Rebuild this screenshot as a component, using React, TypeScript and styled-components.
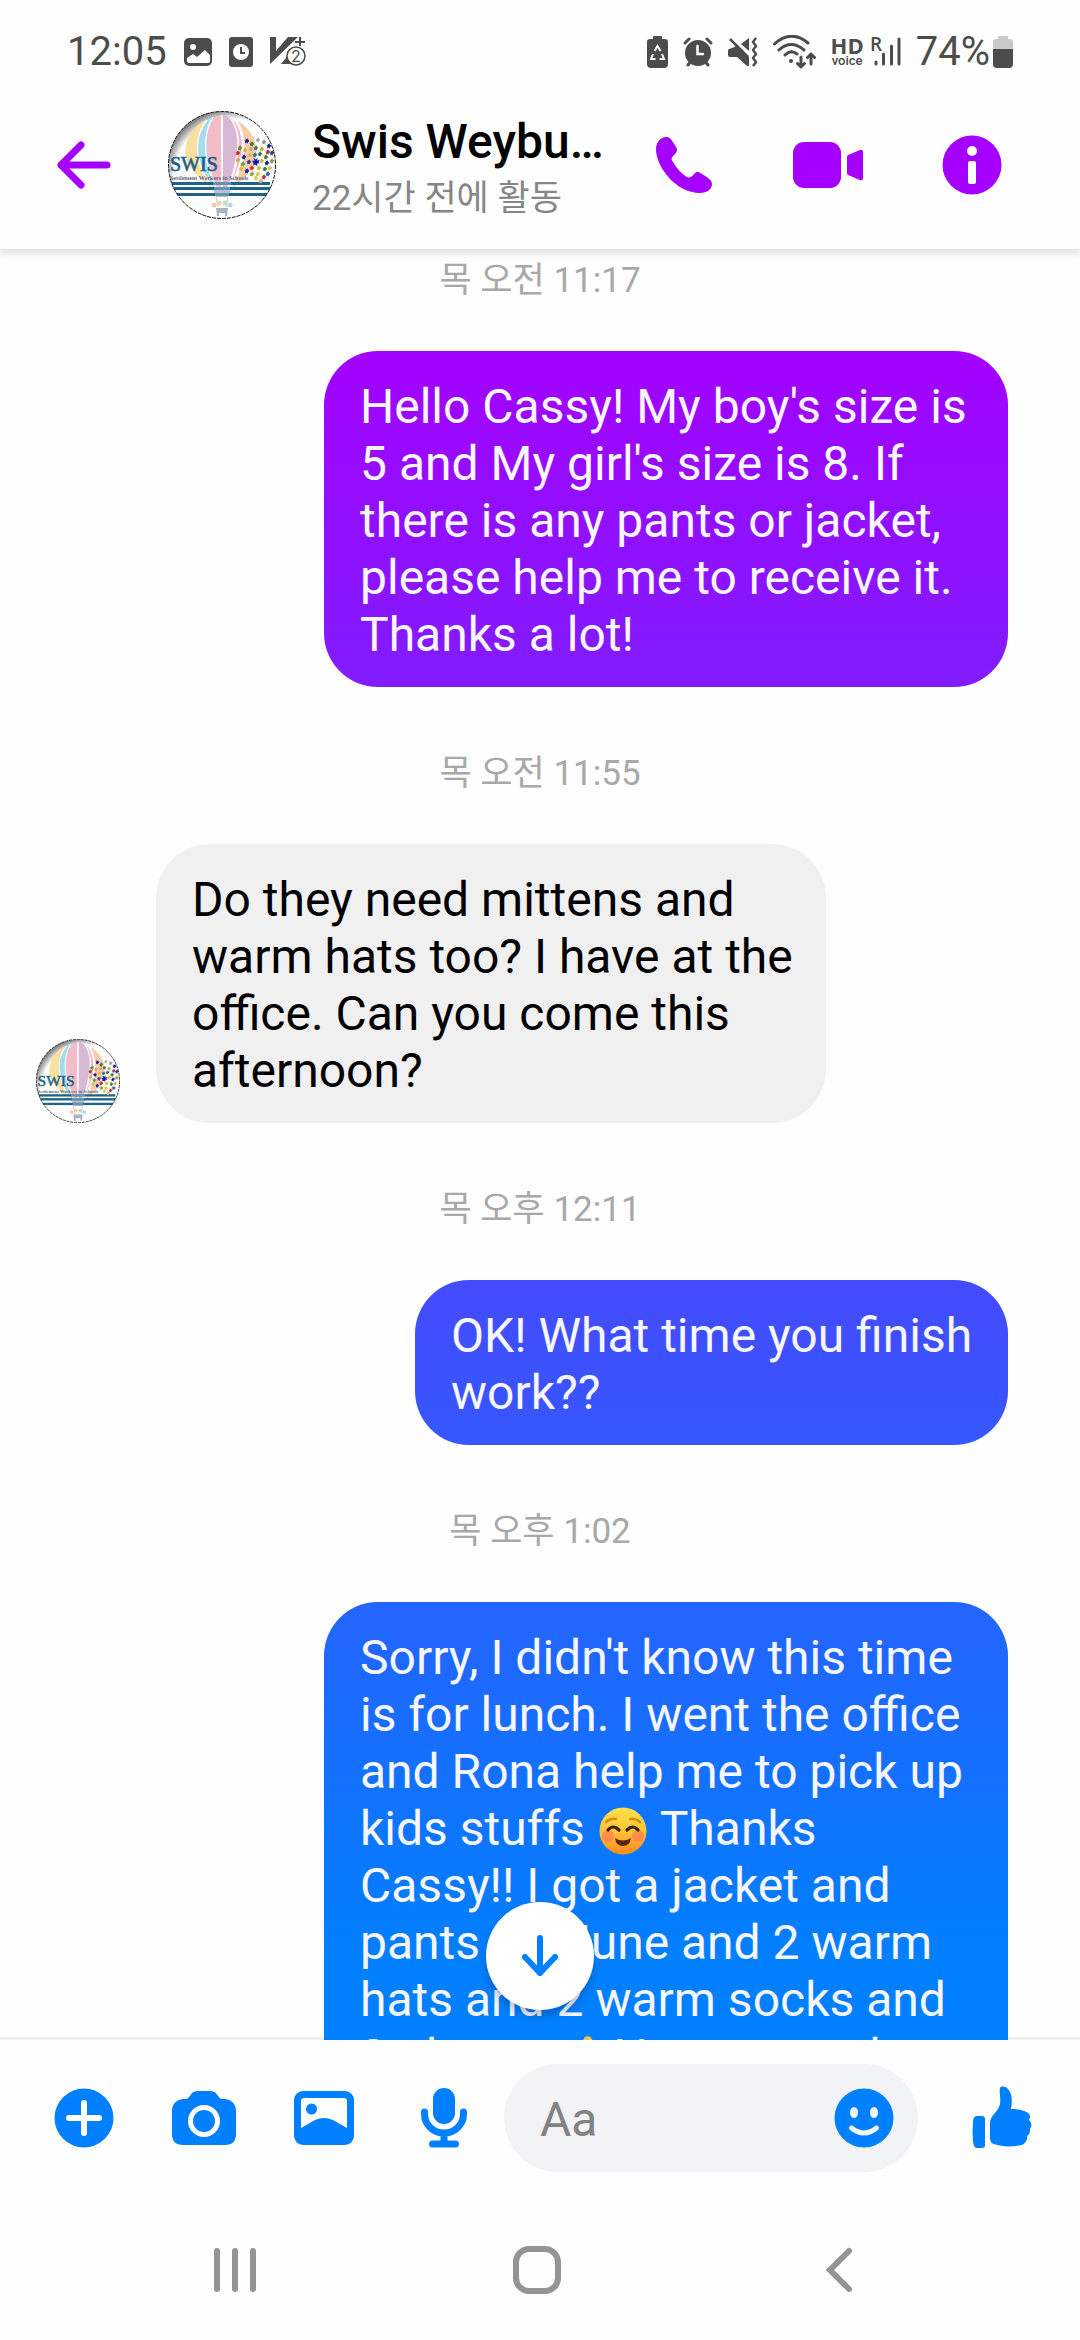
import React from "react";
import styled, { createGlobalStyle } from "styled-components";

const GlobalStyle = createGlobalStyle`
  *, *::before, *::after { box-sizing: border-box; }
  html, body { margin: 0; padding: 0; background: #fefefe; }
  body { font-family: Roboto, "Noto Sans CJK KR", sans-serif; color: #000; }
  svg { display: block; flex: none; }
`;

const ACCENT = "#a500ff";
const BLUE = "#0080ff";
const STATUS = "#4c4c4c";

const Screen = styled.div`
  display: flex;
  flex-direction: column;
  height: 100vh;
  overflow: hidden;
`;

const StatusBar = styled.div`
  display: flex;
  justify-content: space-between;
  align-items: center;
  flex: none;
  height: 81px;
  padding: 22px 67px 0 67px;
  color: ${STATUS};
  font-size: 40px;
  line-height: 48px;
`;

const StatusGroup = styled.div<{ $gap: number }>`
  display: flex;
  align-items: center;
  gap: ${(p) => p.$gap}px;
`;

const HdVoice = styled.div`
  display: flex;
  flex-direction: column;
  align-items: center;
  strong {
    font-family: "Open Sans", "Noto Sans", sans-serif;
    font-size: 22px;
    line-height: 18px;
    font-weight: 700;
  }
  span {
    font-size: 13px;
    line-height: 13px;
    font-weight: 500;
  }
`;

const Header = styled.header`
  position: relative;
  z-index: 1;
  display: flex;
  align-items: center;
  flex: none;
  height: 168px;
  padding-right: 36px;
  background: #fefefe;
  clip-path: inset(0 0 -16px 0);
  box-shadow: 0 2px 8px 2px rgba(0, 0, 0, 0.12);
`;

const IconButton = styled.button<{ $width: number; $color?: string }>`
  display: flex;
  align-items: center;
  justify-content: center;
  flex: none;
  width: ${(p) => p.$width}px;
  height: 108px;
  padding: 0;
  border: 0;
  background: none;
  color: ${(p) => p.$color ?? BLUE};
`;

const Contact = styled.div`
  flex: 1;
  min-width: 0;
  padding: 10px 0 0 36px;
`;

const Name = styled.h1`
  margin: 0;
  font-size: 48px;
  line-height: 58px;
  font-weight: 500;
  white-space: nowrap;
`;

const Activity = styled.p`
  margin: 0;
  font-size: 35px;
  line-height: 56px;
  color: #868686;
  white-space: nowrap;
`;

const ChatArea = styled.main`
  position: relative;
  flex: 1;
  min-height: 0;
  background: linear-gradient(#f0f0f0, #f0f0f0) bottom / 100% 3px no-repeat;
`;

const Messages = styled.div`
  display: flex;
  flex-direction: column;
  height: 100%;
  overflow-y: auto;
  scrollbar-width: none;
`;

const Stamp = styled.time`
  flex: none;
  margin: 66px 0 49px;
  font-size: 35px;
  line-height: 42px;
  text-align: center;
  color: #a8a8a8;
  &:first-child {
    margin-top: 11px;
  }
`;

const MessageRow = styled.div<{ $sent?: boolean }>`
  display: flex;
  flex: none;
  align-items: flex-end;
  justify-content: ${(p) => (p.$sent ? "flex-end" : "flex-start")};
  gap: 36px;
  padding: 0 72px 0 36px;
`;

const Bubble = styled.div<{ $sent?: boolean; $width: number }>`
  max-width: ${(p) => p.$width}px;
  padding: 27px 30px 24px 36px;
  border-radius: 54px;
  font-size: 48px;
  line-height: 57px;
  color: ${(p) => (p.$sent ? "#f6f6ff" : "#000")};
  background: ${(p) =>
    p.$sent ? `linear-gradient(${ACCENT} 14%, ${BLUE} 84%) fixed` : "#f0f0f0"};
`;

const EmojiBox = styled.span`
  display: inline-block;
  width: 52px;
  height: 48px;
  padding: 0 2px;
  vertical-align: -10px;
`;

const JumpButton = styled.button`
  position: absolute;
  left: 50%;
  bottom: 30px;
  display: flex;
  align-items: center;
  justify-content: center;
  width: 108px;
  height: 108px;
  margin-left: -54px;
  padding: 0;
  border: 0;
  border-radius: 50%;
  background: #fff;
  color: ${BLUE};
  box-shadow: 0 6px 10px rgba(0, 0, 0, 0.22);
`;

const Composer = styled.form`
  display: flex;
  flex: none;
  align-items: center;
  padding: 24px 18px 28px 24px;
`;

const InputPill = styled.div`
  display: flex;
  flex: 1;
  min-width: 0;
  height: 108px;
  margin-right: 24px;
  border-radius: 54px;
  background: #f1f3f5;
`;

const TextInput = styled.input`
  flex: 1;
  min-width: 0;
  padding: 2px 0 0 36px;
  border: 0;
  outline: 0;
  background: none;
  font: 400 48px/57px Roboto, "Noto Sans CJK KR", sans-serif;
  &::placeholder {
    color: #828282;
    opacity: 1;
  }
`;

const NavBar = styled.nav`
  display: grid;
  grid-template-columns: repeat(3, 1fr);
  flex: none;
  justify-items: center;
  align-items: center;
  height: 140px;
  padding: 0 90px 0 84px;
`;

const HANDS: [number, number, string][] = [
  [79, 30, "#1a1a9c"], [84, 33, "#2b7a3a"], [90, 29, "#b9a8a0"], [96, 31, "#999"], [101, 35, "#1a1a9c"],
  [72, 37, "#4f8f3c"], [77, 39, "#d9b43c"], [83, 38, "#c8a0a8"], [88, 37, "#3d7a50"], [94, 38, "#b5b034"], [100, 41, "#b03048"],
  [70, 42, "#c0303a"], [76, 46, "#1a1a9c"], [82, 44, "#e0b94a"], [87, 44, "#2f6fa0"], [92, 43, "#3a7f3c"], [98, 46, "#6b6b38"], [104, 42, "#22408c"],
  [70, 49, "#d2b236"], [75, 53, "#5aa04a"], [81, 51, "#3b3b9a"], [94, 50, "#cdb742"], [99, 52, "#1a1a9c"], [104, 50, "#70a046"],
  [73, 58, "#d8c040"], [79, 60, "#1a1a9c"], [84, 57, "#c23030"], [91, 57, "#d9b430"], [97, 58, "#3a7a3a"], [102, 57, "#d4c050"],
  [84, 63, "#7aa848"], [90, 63, "#e0c440"], [96, 66, "#c03030"], [93, 70, "#d9b080"], [88, 67, "#e2c850"], [100, 63, "#3a60a0"],
];

const HAND_PATH = "M-3 -1L-1 -1L-2 -3L0 -2L1 -3.500L1 -1L3 -2L2 0L3 1L1 1L1 3L-1 2L-2 3L-2 1Z";

function Avatar({ size }: { size: number }) {
  const id = `face-${size}`;
  return (
    <svg width={size} height={size} viewBox="0 0 108 108" role="img" aria-label="Swis">
      <defs>
        <clipPath id={id}>
          <circle cx="54" cy="54" r="53.5" />
        </clipPath>
        <radialGradient id={`${id}-rim`} cx="0.6" cy="0.62" r="0.64">
          <stop offset="0.85" stopColor="#fff" />
          <stop offset="1" stopColor="#808080" />
        </radialGradient>
      </defs>
      <g clipPath={`url(#${id})`}>
        <rect width="108" height="108" fill={`url(#${id}-rim)`} />
        <path d="M38 9C20 18 14 36 19 50C24 63 38 72 46 80C32 58 23 32 38 9Z" fill="#f9e0a0" />
        <path d="M42 7C28 20 26 40 34 57C39 68 44 74 48 80C40 52 36 28 46 6Z" fill="#a4dcee" />
        <path d="M53 4C40 6 36 30 41 50C44 66 48 76 51 81H53.500Z" fill="#f4bcc6" />
        <path d="M55 4C68 6 72 30 67 50C64 66 60 76 57 81H54.500Z" fill="#d8b8d4" />
        <path d="M63 6C76 18 76 40 70 56C66 67 62 74 59 80C70 52 74 28 63 6Z" fill="#f6b4d4" />
        <path d="M70 10C86 20 92 36 86 52C82 64 68 74 62 80C76 58 82 32 70 10Z" fill="#f8cda8" />
        <g fill="none" stroke="#fff" strokeWidth="1.300">
          <path d="M54 4V80M45 6C33 24 36 55 50 80M63 6C75 24 72 55 58 80M39 9C22 30 30 60 47 80" />
        </g>
        <path d="M44 76H64L60 86H48Z" fill="#b9c0d8" />
        <path d="M48 86L50 96M60 86L58 96" stroke="#c8c8d0" strokeWidth="1" />
        <g fill="#1f6388">
          <rect y="71" width="102" height="3" />
          <rect y="76" width="104" height="3" />
          <rect y="82" width="102" height="3" />
        </g>
        <g fill="#8fb8c8" opacity="0.600">
          <rect x="45" y="71" width="18" height="3" />
          <rect x="46" y="76" width="16" height="3" />
          <rect x="47" y="82" width="14" height="3" />
        </g>
        <g>
          <circle cx="46" cy="94" r="2.500" fill="#f2c6b8" />
          <circle cx="51" cy="92" r="2.500" fill="#f3d3a2" />
          <circle cx="57" cy="92" r="2.500" fill="#c2dfc0" />
          <circle cx="62" cy="94" r="2.500" fill="#b7d7ea" />
        </g>
        <path d="M48 97H60L59 105H57V102H51V105H49Z" fill="#a3b4c8" />
        {HANDS.map(([x, y, fill]) => (
          <path
            key={`${x}-${y}`}
            transform={`translate(${x} ${y}) scale(0.85)`}
            d={HAND_PATH}
            fill={fill}
          />
        ))}
        <path transform="translate(88 51) scale(1.300)" d={HAND_PATH} fill="#0c1ca8" />
        <text x="2" y="60" fontFamily='"Liberation Serif", serif' fontSize="20" fill="#1d5e84" stroke="#1d5e84" strokeWidth="0.600">
          SWIS
        </text>
        <text x="2" y="69" fontFamily='"Liberation Serif", serif' fontWeight="700" fontSize="6" fill="#66667a">
          Settlement Workers in Schools
        </text>
      </g>
      <circle cx="54" cy="54" r="53.500" fill="none" stroke="#111" strokeWidth="1" strokeDasharray="4 1" />
    </svg>
  );
}

const BlushEmoji = () => (
  <EmojiBox role="img" aria-label="smiling face">
    <svg width="48" height="48" viewBox="0 0 48 48">
      <defs>
        <linearGradient id="skin" x1="0" y1="0" x2="0" y2="1">
          <stop offset="0" stopColor="#ffe24a" />
          <stop offset="0.500" stopColor="#ffc436" />
          <stop offset="1" stopColor="#ff8a1c" />
        </linearGradient>
      </defs>
      <circle cx="24" cy="24" r="23.500" fill="url(#skin)" />
      <circle cx="9" cy="29" r="6" fill="#ff7a50" opacity="0.700" />
      <circle cx="39" cy="29" r="6" fill="#ff7a50" opacity="0.700" />
      <g fill="none" strokeLinecap="round">
        <path d="M7 15Q11 11 17 12M31 12Q37 11 41 15" stroke="#d98a12" strokeWidth="2.500" />
        <path d="M9 23Q14 17 20 23M28 23Q34 17 39 23" stroke="#3a2410" strokeWidth="3.200" />
      </g>
      <path d="M16 31Q24 36 32 31Q31 39 24 39Q17 39 16 31Z" fill="#5a2410" />
    </svg>
  </EmojiBox>
);

const ThumbEmoji = () => (
  <EmojiBox role="img" aria-label="thumbs up">
    <svg width="48" height="48" viewBox="0 0 48 48">
      <path
        d="M6 24C14 22 20 14 32 4C32 1 38 0 40 4C42 10 36 16 34 20H44C48 22 48 40 40 46H14L6 42Z"
        fill="#f7c544"
      />
    </svg>
  </EmojiBox>
);

const PictureGlyph = () => (
  <svg width="28" height="28" viewBox="0 0 28 28">
    <rect width="28" height="28" rx="5" fill={STATUS} />
    <circle cx="9" cy="9" r="3" fill="#fff" />
    <path d="M3 23V20L9 16L13 19L21 12L26 17V23Q26 25 24 25H5Q3 25 3 23Z" fill="#fff" />
  </svg>
);

const ClockCardGlyph = () => (
  <svg width="24" height="30" viewBox="0 0 24 30">
    <rect width="24" height="30" rx="3" fill={STATUS} />
    <circle cx="12" cy="15" r="8" fill="#fff" />
    <path d="M12 10V16H16" fill="none" stroke={STATUS} strokeWidth="2" />
  </svg>
);

const VaccineGlyph = () => (
  <svg width="36" height="31" viewBox="0 0 36 31">
    <path d="M0 1H6V15L18 1H28L0 28Z" fill={STATUS} />
    <path d="M11 28L19 18L17 16L23 12V28Z" fill={STATUS} />
    <path d="M30 1V10M25 6H35" stroke={STATUS} strokeWidth="2" />
    <circle cx="26" cy="20" r="9" fill="#fefefe" stroke={STATUS} strokeWidth="1.500" />
    <text x="26" y="26" textAnchor="middle" fontFamily="Roboto, sans-serif" fontSize="16" fill={STATUS}>
      2
    </text>
  </svg>
);

const EcoBatteryGlyph = () => (
  <svg width="21" height="32" viewBox="0 0 21 32">
    <path d="M6 1Q6 0 7 0H14Q15 0 15 1V3H18Q21 3 21 6V28Q21 32 17 32H4Q0 32 0 28V6Q0 3 3 3H6Z" fill={STATUS} />
    <path d="M7.500 15L10.500 10L13.500 15M15 18L17 23H12.500M8.500 23H4L6 18" fill="none" stroke="#fff" strokeWidth="2" />
  </svg>
);

const AlarmGlyph = () => (
  <svg width="30" height="30" viewBox="0 0 30 30" fill="none" stroke={STATUS} strokeLinecap="round">
    <circle cx="15" cy="16" r="13" fill={STATUS} stroke="none" />
    <path d="M2 6L6 2M28 6L24 2M5 28L8 24M25 28L22 24" strokeWidth="3" />
    <path d="M14.500 9V17H20" stroke="#fff" strokeWidth="2.500" />
  </svg>
);

const MuteGlyph = () => (
  <svg width="30" height="30" viewBox="0 0 30 30">
    <path d="M13 7L21 1V14ZM1 12Q0 12 0 14V18Q0 20 2 20H9L19 29Q21 30 21 27V20L8 9Q5 11 1 12Z" fill={STATUS} />
    <path d="M2 2L20 20" stroke={STATUS} strokeWidth="2.500" />
    <path d="M28 1L25 5L28 9L25 13L28 17L25 21L28 25L25 29" fill="none" stroke={STATUS} strokeWidth="2.500" strokeLinejoin="round" />
  </svg>
);

const WifiGlyph = () => (
  <svg width="43" height="34" viewBox="0 0 43 34" fill="none" stroke={STATUS} strokeWidth="3" strokeLinecap="round" strokeLinejoin="round">
    <path d="M1.500 9Q18 -6 35 8M6 15Q18 4 31 15M12 20Q18 14 24 19" />
    <circle cx="18" cy="26" r="2" fill={STATUS} stroke="none" />
    <path d="M28 22V32M24.500 28.500L28 32L31.500 28.500M38 29V19M34.500 22.500L38 19L41.500 22.500" />
  </svg>
);

const SignalGlyph = () => (
  <svg width="30" height="31" viewBox="0 0 30 31">
    <text x="-1" y="15" fontFamily='"Open Sans", "Noto Sans", sans-serif' fontSize="19" fontWeight="600" fill={STATUS}>
      R
    </text>
    <path d="M5 26V28M12.500 18V28M20.500 10V28M28 3V28" stroke={STATUS} strokeWidth="3" strokeLinecap="round" />
  </svg>
);

const BatteryGlyph = () => (
  <svg width="20" height="32" viewBox="0 0 20 32">
    <path d="M5 1Q5 0 6 0H14Q15 0 15 1V3H17Q20 3 20 6V14H0V6Q0 3 3 3H5Z" fill="#cacaca" />
    <path d="M0 13H20V28Q20 32 16 32H4Q0 32 0 28Z" fill={STATUS} />
  </svg>
);

const BackArrow = () => (
  <svg width="54" height="48" viewBox="0 0 54 48" fill="none" stroke="currentColor" strokeWidth="7" strokeLinecap="round" strokeLinejoin="round">
    <path d="M4 24H50M24 4L4 24L24 44" />
  </svg>
);

const PhoneIcon = () => (
  <svg width="56" height="57" viewBox="0 0 56 57" fill="currentColor">
    <path d="M0 12C0 4 6 0 10 0C14 0 15 2 20 10C22 13 21 15 18 18C15 21 15 22 17 25C21 32 26 37 31 40C33 41 35 41 38 37C41 34 43 35 46 37C54 42 56 44 56 47C56 52 51 56 44 56C20 56 0 30 0 12Z" />
  </svg>
);

const VideoIcon = () => (
  <svg width="70" height="46" viewBox="0 0 70 46" fill="currentColor">
    <rect width="48" height="46" rx="11" />
    <path d="M54 15Q54 14 55 13L67 8Q70 7 70 10V36Q70 39 67 38L55 33Q54 32 54 31Z" />
  </svg>
);

const InfoIcon = () => (
  <svg width="60" height="60" viewBox="0 0 60 60">
    <circle cx="30" cy="30" r="29.500" fill="currentColor" />
    <circle cx="30" cy="16" r="5" fill="#fff" />
    <rect x="26" y="26" width="8" height="23" rx="2" fill="#fff" />
  </svg>
);

const DownArrow = () => (
  <svg width="38" height="42" viewBox="0 0 38 42" fill="none" stroke="currentColor" strokeWidth="6" strokeLinecap="round" strokeLinejoin="round">
    <path d="M19 3V38M4 22L19 38L34 22" />
  </svg>
);

const PlusIcon = () => (
  <svg width="60" height="60" viewBox="0 0 60 60">
    <circle cx="30" cy="30" r="29.500" fill="currentColor" />
    <path d="M30 15V45M15 30H45" stroke="#fff" strokeWidth="6" strokeLinecap="round" />
  </svg>
);

const CameraIcon = () => (
  <svg width="64" height="54" viewBox="0 0 64 54">
    <path d="M26 0H38C44 0 45 4 47 6C48 8 50 8 53 8C60 9 64 13 64 20V43Q64 54 53 54H11Q0 54 0 43V20C0 13 4 9 11 8C14 8 16 8 17 6C19 4 20 0 26 0Z" fill="currentColor" />
    <circle cx="32" cy="30" r="13.500" fill="currentColor" stroke="#fff" strokeWidth="5" />
  </svg>
);

const GalleryIcon = () => (
  <svg width="60" height="54" viewBox="0 0 60 54">
    <rect width="60" height="54" rx="9" fill="currentColor" />
    <path d="M7 37V10Q7 7 10 7H50Q53 7 53 10V37L39 29Q30 25 21 29Z" fill="#fff" />
    <circle cx="17.500" cy="18" r="5.500" fill="currentColor" />
  </svg>
);

const MicIcon = () => (
  <svg width="46" height="60" viewBox="0 0 46 60">
    <rect x="12" width="22" height="36" rx="11" fill="currentColor" />
    <path d="M3.500 24V26A19.500 19 0 0 0 42.500 26V24M23 46V54M11.500 56H34.500" fill="none" stroke="currentColor" strokeWidth="7" strokeLinecap="round" />
  </svg>
);

const SmileIcon = () => (
  <svg width="60" height="60" viewBox="0 0 60 60">
    <circle cx="30" cy="30" r="29.500" fill="currentColor" />
    <ellipse cx="20" cy="24.500" rx="4" ry="5.500" fill="#f1f8ff" />
    <ellipse cx="40" cy="24.500" rx="4" ry="5.500" fill="#f1f8ff" />
    <path d="M17.500 40Q30 50 42.500 40" fill="none" stroke="#f1f8ff" strokeWidth="5" strokeLinecap="round" />
  </svg>
);

const LikeIcon = () => (
  <svg width="60" height="64" viewBox="0 0 60 64" fill="currentColor">
    <path d="M4 30H10Q13 30 13 33V59Q13 62 10 62H5Q2 62 1 56Q0 46 1 36Q1 31 4 30Z" />
    <path d="M28 2C29 0 33 0 36 3C41 9 40 16 39 23C46 23 52 24 56 27C59 29 58 32 57 34C60 37 60 40 58 43C58 46 58 48 55 50C56 53 54 57 50 59C40 61 30 61 22 58Q18 57 18 52V38C18 28 26 27 28 18C29 12 27 6 28 2Z" />
  </svg>
);

const RecentsIcon = () => (
  <svg width="42" height="46" viewBox="0 0 42 46" stroke="currentColor" strokeWidth="6" strokeLinecap="round">
    <path d="M3 4V42M21 4V42M39 4V42" />
  </svg>
);

const HomeIcon = () => (
  <svg width="48" height="48" viewBox="0 0 48 48" fill="none" stroke="currentColor" strokeWidth="6">
    <rect x="3" y="3" width="42" height="42" rx="13" />
  </svg>
);

const BackIcon = () => (
  <svg width="28" height="46" viewBox="0 0 28 46" fill="none" stroke="currentColor" strokeWidth="6" strokeLinecap="round">
    <path d="M24 4L5 23L24 42" />
  </svg>
);

export default function App() {
  return (
    <Screen>
      <GlobalStyle />
      <StatusBar>
        <StatusGroup $gap={17}>
          <span>12:05</span>
          <PictureGlyph />
          <ClockCardGlyph />
          <VaccineGlyph />
        </StatusGroup>
        <StatusGroup $gap={15}>
          <EcoBatteryGlyph />
          <AlarmGlyph />
          <MuteGlyph />
          <WifiGlyph />
          <StatusGroup $gap={7}>
            <HdVoice>
              <strong>HD</strong>
              <span>voice</span>
            </HdVoice>
            <SignalGlyph />
          </StatusGroup>
          <StatusGroup $gap={3}>
            <span>74%</span>
            <BatteryGlyph />
          </StatusGroup>
        </StatusGroup>
      </StatusBar>

      <Header>
        <IconButton $width={168} $color={ACCENT} aria-label="뒤로">
          <BackArrow />
        </IconButton>
        <Avatar size={108} />
        <Contact>
          <Name>Swis Weybu…</Name>
          <Activity>22시간 전에 활동</Activity>
        </Contact>
        <IconButton $width={144} $color={ACCENT} aria-label="음성 통화">
          <PhoneIcon />
        </IconButton>
        <IconButton $width={144} $color={ACCENT} aria-label="영상 통화">
          <VideoIcon />
        </IconButton>
        <IconButton $width={144} $color={ACCENT} aria-label="정보">
          <InfoIcon />
        </IconButton>
      </Header>

      <ChatArea>
        <Messages>
          <Stamp>목 오전 11:17</Stamp>
          <MessageRow $sent>
            <Bubble $sent $width={684}>
              Hello Cassy! My boy's size is 5 and My girl's size is 8. If there is any pants or
              jacket, please help me to receive it. Thanks a lot!
            </Bubble>
          </MessageRow>
          <Stamp>목 오전 11:55</Stamp>
          <MessageRow>
            <Avatar size={84} />
            <Bubble $width={670}>
              Do they need mittens and warm hats too? I have at the office. Can you come this
              afternoon?
            </Bubble>
          </MessageRow>
          <Stamp>목 오후 12:11</Stamp>
          <MessageRow $sent>
            <Bubble $sent $width={593}>
              OK! What time you finish work??
            </Bubble>
          </MessageRow>
          <Stamp>목 오후 1:02</Stamp>
          <MessageRow $sent>
            <Bubble $sent $width={684}>
              Sorry, I didn't know this time is for lunch. I went the office and Rona help me to
              pick up kids stuffs <BlushEmoji /> Thanks Cassy!! I got a jacket and pants for June
              and 2 warm hats and 2 warm socks and 2 gloves <ThumbEmoji /> Have a good
            </Bubble>
          </MessageRow>
        </Messages>
        <JumpButton aria-label="아래로">
          <DownArrow />
        </JumpButton>
      </ChatArea>

      <Composer onSubmit={(e) => e.preventDefault()}>
        <IconButton type="button" $width={120} aria-label="더 보기">
          <PlusIcon />
        </IconButton>
        <IconButton type="button" $width={120} aria-label="카메라">
          <CameraIcon />
        </IconButton>
        <IconButton type="button" $width={120} aria-label="갤러리">
          <GalleryIcon />
        </IconButton>
        <IconButton type="button" $width={120} aria-label="음성 녹음">
          <MicIcon />
        </IconButton>
        <InputPill>
          <TextInput placeholder="Aa" aria-label="메시지" />
          <IconButton type="button" $width={108} aria-label="이모티콘">
            <SmileIcon />
          </IconButton>
        </InputPill>
        <IconButton type="button" $width={120} aria-label="좋아요">
          <LikeIcon />
        </IconButton>
      </Composer>

      <NavBar>
        <IconButton $width={120} $color="#949494" aria-label="최근 앱">
          <RecentsIcon />
        </IconButton>
        <IconButton $width={120} $color="#949494" aria-label="홈">
          <HomeIcon />
        </IconButton>
        <IconButton $width={120} $color="#949494" aria-label="이전">
          <BackIcon />
        </IconButton>
      </NavBar>
    </Screen>
  );
}
